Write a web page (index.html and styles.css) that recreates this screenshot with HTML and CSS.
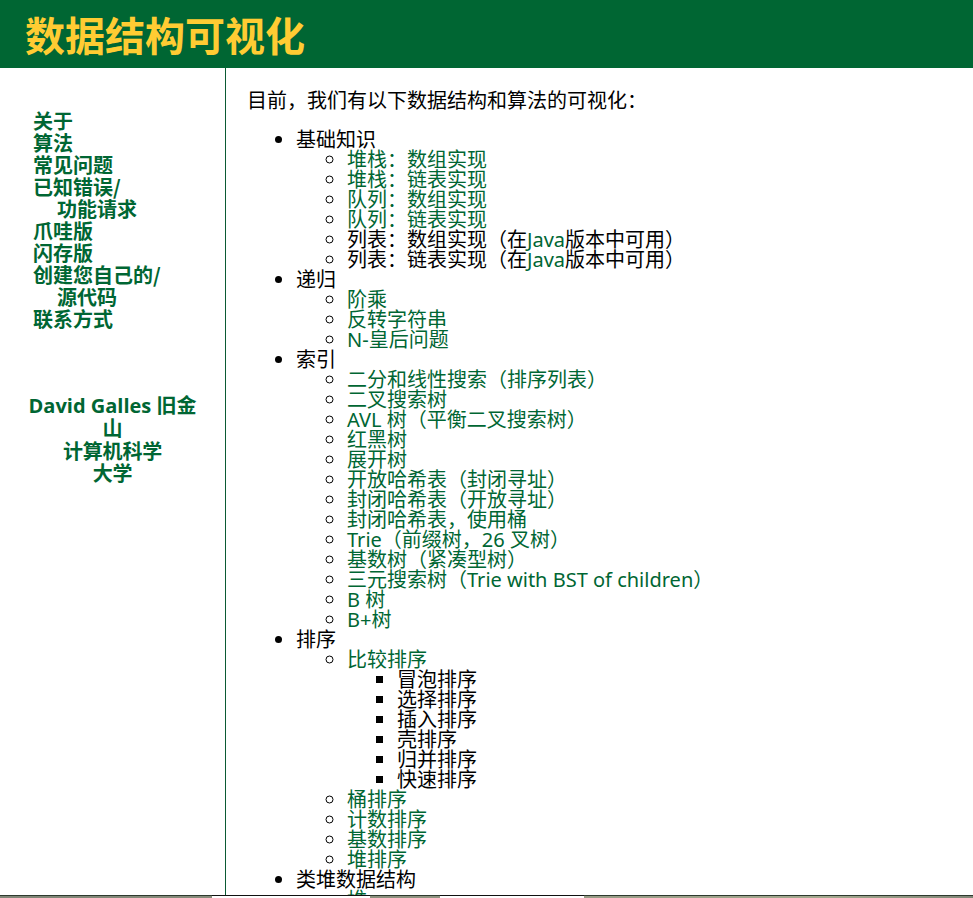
FILE: index.html
```html
<!DOCTYPE html>
<html lang="zh-CN">
<head>
<meta charset="utf-8">
<title>数据结构可视化</title>
<link rel="stylesheet" href="styles.css">
</head>
<body>
<header class="header">
  <h1 class="title">数据结构可视化</h1>
</header>
<div class="layout">
  <nav class="sidebar">
    <ul class="nav-list">
      <li><a href="#">关于</a></li>
      <li><a href="#">算法</a></li>
      <li><a href="#">常见问题</a></li>
      <li><a href="#">已知错误/<br>功能请求</a></li>
      <li><a href="#">爪哇版</a></li>
      <li><a href="#">闪存版</a></li>
      <li><a href="#">创建您自己的/<br>源代码</a></li>
      <li><a href="#">联系方式</a></li>
    </ul>
    <p class="author"><a href="#">David Galles 旧金<br>山</a><br><a href="#">计算机科学</a><br><a href="#">大学</a></p>
  </nav>
  <main class="content">
    <p class="intro">目前，我们有以下数据结构和算法的可视化：</p>
    <ul class="algo-list">
      <li>基础知识
        <ul>
          <li><a href="#">堆栈：数组实现</a></li>
          <li><a href="#">堆栈：链表实现</a></li>
          <li><a href="#">队列：数组实现</a></li>
          <li><a href="#">队列：链表实现</a></li>
          <li>列表：数组实现（在<a href="#">Java</a>版本中可用）</li>
          <li>列表：链表实现（在<a href="#">Java</a>版本中可用）</li>
        </ul>
      </li>
      <li>递归
        <ul>
          <li><a href="#">阶乘</a></li>
          <li><a href="#">反转字符串</a></li>
          <li><a href="#">N-皇后问题</a></li>
        </ul>
      </li>
      <li>索引
        <ul>
          <li><a href="#">二分和线性搜索（排序列表）</a></li>
          <li><a href="#">二叉搜索树</a></li>
          <li><a href="#">AVL 树（平衡二叉搜索树）</a></li>
          <li><a href="#">红黑树</a></li>
          <li><a href="#">展开树</a></li>
          <li><a href="#">开放哈希表（封闭寻址）</a></li>
          <li><a href="#">封闭哈希表（开放寻址）</a></li>
          <li><a href="#">封闭哈希表，使用桶</a></li>
          <li><a href="#">Trie（前缀树，26 叉树）</a></li>
          <li><a href="#">基数树（紧凑型树）</a></li>
          <li><a href="#">三元搜索树（Trie with BST of children）</a></li>
          <li><a href="#">B 树</a></li>
          <li><a href="#">B+树</a></li>
        </ul>
      </li>
      <li>排序
        <ul>
          <li><a href="#">比较排序</a>
            <ul>
              <li>冒泡排序</li>
              <li>选择排序</li>
              <li>插入排序</li>
              <li>壳排序</li>
              <li>归并排序</li>
              <li>快速排序</li>
            </ul>
          </li>
          <li><a href="#">桶排序</a></li>
          <li><a href="#">计数排序</a></li>
          <li><a href="#">基数排序</a></li>
          <li><a href="#">堆排序</a></li>
        </ul>
      </li>
      <li>类堆数据结构
        <ul>
          <li><a href="#">堆</a></li>
          <li><a href="#">二项队列</a></li>
          <li><a href="#">斐波那契堆</a></li>
          <li><a href="#">左偏堆</a></li>
          <li><a href="#">斜堆</a></li>
        </ul>
      </li>
    </ul>
  </main>
</div>
<div class="taskbar">
  <span class="task task-one"></span>
  <span class="task task-two"></span>
</div>
</body>
</html>
```

FILE: styles.css
```css
html, body {
  margin: 0;
  padding: 0;
  overflow: hidden;
  height: 100%;
}

body {
  font-family: "Noto Sans", "Noto Sans CJK SC", sans-serif;
  font-size: 20px;
  color: #000;
  background: #fff;
}

a {
  color: #006633;
  text-decoration: none;
}

.header {
  background: #006633;
  height: 68px;
  padding-left: 25px;
  display: flex;
  align-items: center;
}

.title {
  margin: 0;
  font-family: "Noto Sans CJK SC", sans-serif;
  font-size: 40px;
  font-weight: 700;
  line-height: 1;
  color: #ffcc33;
}

.layout {
  display: flex;
  align-items: stretch;
  min-height: calc(100% - 68px);
}

.sidebar {
  flex: 0 0 225px;
  width: 225px;
  border-right: 1px solid #0b5a34;
  font-family: "Noto Sans CJK SC", sans-serif;
  font-weight: 700;
  font-size: 20px;
}

.nav-list {
  list-style: none;
  margin: 42px 0 0 0;
  padding: 0;
  line-height: 22px;
}

.nav-list li {
  padding-left: 57px;
  text-indent: -24px;
}

.author {
  margin: 64px 0 0 0;
  text-align: center;
  line-height: 22px;
  letter-spacing: -0.2px;
}

.author a:first-child {
  font-family: "Open Sans", "Noto Sans CJK SC", sans-serif;
  letter-spacing: 0;
}

.content {
  flex: 1;
  padding: 23px 0 0 21px;
  line-height: 20px;
}

.intro {
  margin: 0 0 19px 0;
}

.algo-list {
  margin: 0;
  padding-left: 49px;
}

.algo-list ul {
  margin: 0;
  padding-left: 51px;
}

.algo-list ul ul {
  padding-left: 50px;
}

.taskbar {
  position: fixed;
  left: 0;
  right: 0;
  bottom: 0;
  height: 2px;
  border-top: 1px solid #2e3a2e;
  background: linear-gradient(90deg, #7f8576, #8d917f 40%, #a4a98f 85%, #7f8576);
  display: flex;
  padding-left: 212px;
  gap: 70px;
}

.task {
  display: block;
  height: 3px;
  margin-top: -1px;
  background: #fff;
  border-top: 1px solid #111;
  box-sizing: border-box;
}

.task-one {
  width: 158px;
}

.task-two {
  width: 144px;
}
```
